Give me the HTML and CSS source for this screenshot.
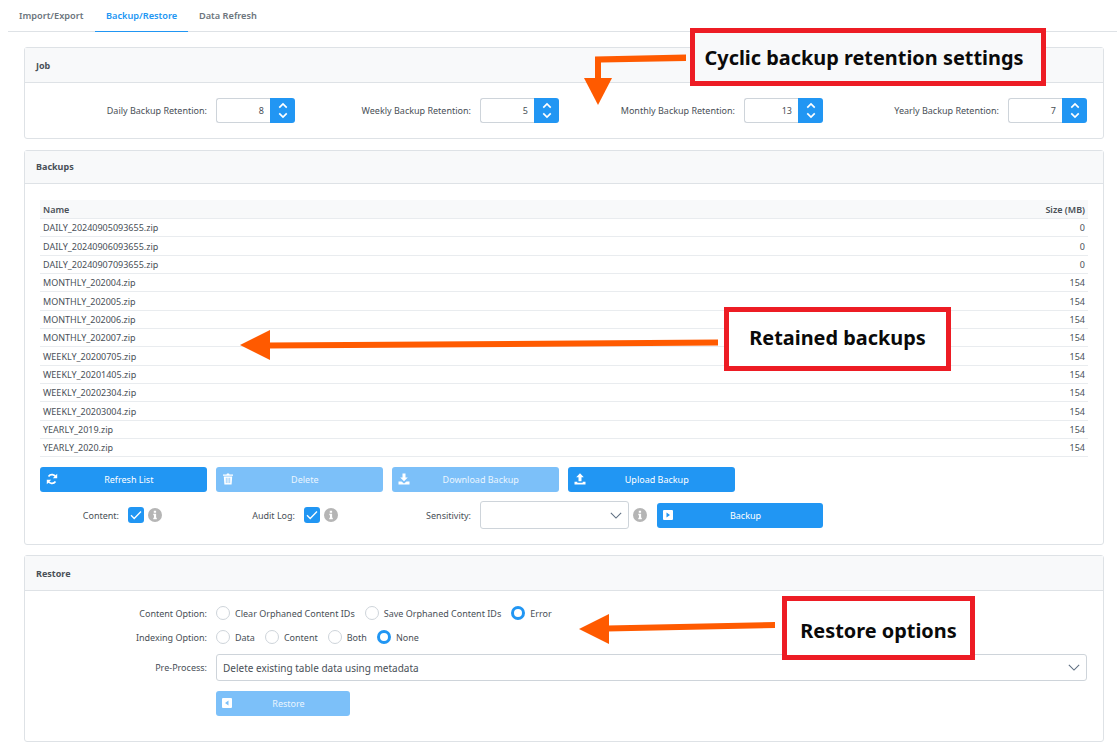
FILE: index.html
```html
<!DOCTYPE html>
<html lang="en">
<head>
    <meta charset="UTF-8">
    <meta name="viewport" content="width=device-width, initial-scale=1.0">
    <title>Backup/Restore</title>
    <link rel="stylesheet" href="styles.css">
</head>
<body>
    <svg width="0" height="0" class="defs">
        <defs>
            <symbol id="i-up" viewBox="0 0 12 8"><path d="M1.5 6.5 6 2l4.500 4.500" fill="none" stroke="currentColor" stroke-width="2"/></symbol>
            <symbol id="i-down" viewBox="0 0 12 8"><path d="M1.500 1.500 6 6l4.500-4.500" fill="none" stroke="currentColor" stroke-width="2"/></symbol>
            <symbol id="i-chev" viewBox="0 0 14 8"><path d="M1 1l6 6 6-6" fill="none" stroke="#5f6f82" stroke-width="1.300"/></symbol>
            <symbol id="i-refresh" viewBox="0 0 12 12"><path d="M10 4.200A4.300 4.300 0 0 0 2.500 3.400M2 7.800a4.300 4.300 0 0 0 7.500.8" fill="none" stroke="#fff" stroke-width="1.700"/><path d="M11.200 .8v4.400H6.800zM.8 11.200V6.800h4.400z" fill="#fff"/></symbol>
            <symbol id="i-trash" viewBox="0 0 12 12"><path d="M1 1.500h3.500L5 .5h2l.5 1H11v1.200H1zM1.800 3.400h8.400l-.6 8.100H2.400z" fill="#fff"/><path d="M4.300 4.800v5.300M6 4.800v5.300M7.700 4.800v5.300" stroke-width=".7" stroke="#7cc0f9"/></symbol>
            <symbol id="i-download" viewBox="0 0 12 12"><path d="M4.500 .5h3v4h2.300L6 8.300 2.200 4.500h2.300zM.5 8.500h3L6 10.500l2.500-2h3v3H.5z" fill="#fff"/></symbol>
            <symbol id="i-upload" viewBox="0 0 12 12"><path d="M6 .3 9.800 4.200H7.500v4h-3v-4H2.200zM.5 8.700h2.800v1h5.400v-1h2.800v2.800H.5z" fill="#fff"/></symbol>
            <symbol id="i-play" viewBox="0 0 10 10"><path fill-rule="evenodd" d="M1 0h8a1 1 0 0 1 1 1v8a1 1 0 0 1-1 1H1a1 1 0 0 1-1-1V1a1 1 0 0 1 1-1zM3.500 2.500v5L7 5z" fill="#fff"/></symbol>
            <symbol id="i-back" viewBox="0 0 10 10"><path fill-rule="evenodd" d="M1 0h8a1 1 0 0 1 1 1v8a1 1 0 0 1-1 1H1a1 1 0 0 1-1-1V1a1 1 0 0 1 1-1zM6.500 2.500v5L3 5z" fill="#fff"/></symbol>
            <symbol id="i-check" viewBox="0 0 16 16"><path d="M3 8.300l3.200 3.200L13 4.500" fill="none" stroke="#fff" stroke-width="1.300"/></symbol>
            <symbol id="i-info" viewBox="0 0 14 14"><circle cx="7" cy="7" r="7" fill="#b5b5b5"/><path d="M5.800 2.800h2.300v2H5.800zM5.300 5.800h2.800v4h.7v1.400H5.300V9.800H6V7.200h-.7z" fill="#fff"/></symbol>
        </defs>
    </svg>

    <nav class="tabs">
        <a class="tab">Import/Export</a>
        <a class="tab active">Backup/Restore</a>
        <a class="tab">Data Refresh</a>
    </nav>

    <main class="content">
        <section class="panel panel-job">
            <header class="panel-head head-job">Job</header>
            <div class="job-grid">
                <div class="field">
                    <label>Daily Backup Retention:</label>
                    <div class="spinner"><input type="text" value="8"><span class="spin-btn"><svg><use href="#i-up"/></svg><svg><use href="#i-down"/></svg></span></div>
                </div>
                <div class="field">
                    <label>Weekly Backup Retention:</label>
                    <div class="spinner"><input type="text" value="5"><span class="spin-btn"><svg><use href="#i-up"/></svg><svg><use href="#i-down"/></svg></span></div>
                </div>
                <div class="field">
                    <label>Monthly Backup Retention:</label>
                    <div class="spinner"><input type="text" value="13"><span class="spin-btn"><svg><use href="#i-up"/></svg><svg><use href="#i-down"/></svg></span></div>
                </div>
                <div class="field">
                    <label>Yearly Backup Retention:</label>
                    <div class="spinner"><input type="text" value="7"><span class="spin-btn"><svg><use href="#i-up"/></svg><svg><use href="#i-down"/></svg></span></div>
                </div>
            </div>
        </section>

        <section class="panel panel-backups">
            <header class="panel-head">Backups</header>
            <div class="backups-body">
                <table class="files">
                    <thead>
                        <tr><th>Name</th><th class="num">Size (MB)</th></tr>
                    </thead>
                    <tbody>
                        <tr><td>DAILY_20240905093655.zip</td><td class="num">0</td></tr>
                        <tr><td>DAILY_20240906093655.zip</td><td class="num">0</td></tr>
                        <tr><td>DAILY_20240907093655.zip</td><td class="num">0</td></tr>
                        <tr><td>MONTHLY_202004.zip</td><td class="num">154</td></tr>
                        <tr><td>MONTHLY_202005.zip</td><td class="num">154</td></tr>
                        <tr><td>MONTHLY_202006.zip</td><td class="num">154</td></tr>
                        <tr><td>MONTHLY_202007.zip</td><td class="num">154</td></tr>
                        <tr><td>WEEKLY_20200705.zip</td><td class="num">154</td></tr>
                        <tr><td>WEEKLY_20201405.zip</td><td class="num">154</td></tr>
                        <tr><td>WEEKLY_20202304.zip</td><td class="num">154</td></tr>
                        <tr><td>WEEKLY_20203004.zip</td><td class="num">154</td></tr>
                        <tr><td>YEARLY_2019.zip</td><td class="num">154</td></tr>
                        <tr><td>YEARLY_2020.zip</td><td class="num">154</td></tr>
                    </tbody>
                </table>

                <div class="btn-row">
                    <button class="btn"><svg class="btn-icon"><use href="#i-refresh"/></svg>Refresh List</button>
                    <button class="btn off"><svg class="btn-icon"><use href="#i-trash"/></svg>Delete</button>
                    <button class="btn off"><svg class="btn-icon"><use href="#i-download"/></svg>Download Backup</button>
                    <button class="btn"><svg class="btn-icon"><use href="#i-upload"/></svg>Upload Backup</button>
                </div>

                <div class="opt-row">
                    <div class="opt opt-content">
                        <label>Content:</label>
                        <span class="check"><svg><use href="#i-check"/></svg></span>
                        <svg class="info"><use href="#i-info"/></svg>
                    </div>
                    <div class="opt opt-audit">
                        <label>Audit Log:</label>
                        <span class="check"><svg><use href="#i-check"/></svg></span>
                        <svg class="info"><use href="#i-info"/></svg>
                    </div>
                    <div class="opt opt-sens">
                        <label>Sensitivity:</label>
                        <div class="select select-sens"><span></span><svg><use href="#i-chev"/></svg></div>
                        <svg class="info"><use href="#i-info"/></svg>
                        <button class="btn btn-backup"><svg class="btn-icon small"><use href="#i-play"/></svg>Backup</button>
                    </div>
                </div>
            </div>
        </section>

        <section class="panel panel-restore">
            <header class="panel-head head-restore">Restore</header>
            <div class="restore-body">
                <div class="form-row">
                    <label>Content Option:</label>
                    <div class="radios">
                        <span class="radio"></span><span class="r-text">Clear Orphaned Content IDs</span>
                        <span class="radio"></span><span class="r-text">Save Orphaned Content IDs</span>
                        <span class="radio on"></span><span class="r-text">Error</span>
                    </div>
                </div>
                <div class="form-row">
                    <label>Indexing Option:</label>
                    <div class="radios">
                        <span class="radio"></span><span class="r-text">Data</span>
                        <span class="radio"></span><span class="r-text">Content</span>
                        <span class="radio"></span><span class="r-text">Both</span>
                        <span class="radio on"></span><span class="r-text">None</span>
                    </div>
                </div>
                <div class="form-row row-pre">
                    <label>Pre-Process:</label>
                    <div class="select select-pre"><span>Delete existing table data using metadata</span><svg><use href="#i-chev"/></svg></div>
                </div>
                <div class="form-row row-btn">
                    <label></label>
                    <button class="btn off btn-restore"><svg class="btn-icon small"><use href="#i-back"/></svg>Restore</button>
                </div>
            </div>
        </section>
    </main>

    <!-- annotations drawn over the screenshot -->
    <svg class="arrows" width="1117" height="745" viewBox="0 0 1117 745">
        <g fill="#ff5a00" stroke="none">
            <path d="M686 54.500v6.500l-85 1.500V80h-6V56.500z"/>
            <path d="M584 78h28l-14 27z"/>
            <path d="M718 339.500v6l-450 3v-6z"/>
            <path d="M240 345l30-15v30z"/>
            <path d="M775 622v6l-168 3.500v-6z"/>
            <path d="M579 629l30-15v30z"/>
        </g>
    </svg>
    <div class="note note-cyclic">Cyclic backup retention settings</div>
    <div class="note note-retained">Retained backups</div>
    <div class="note note-restore">Restore options</div>
</body>
</html>
```

FILE: styles.css
```css
* {
    box-sizing: border-box;
}

body {
    margin: 0;
    padding-left: 8px;
    height: 745px;
    overflow: hidden;
    position: relative;
    background-color: #ffffff;
    color: #495057;
    font-family: "Noto Sans", "Open Sans", Arial, sans-serif;
    font-size: 9px;
}

.defs {
    position: absolute;
}

/* Tabs */
.tabs {
    display: flex;
    height: 32px;
    border-bottom: 1px solid #dee2e6;
}

.tab {
    height: 32px;
    padding: 9px 11px 0;
    font-size: 9.200px;
    font-weight: 600;
    color: #6c757d;
    white-space: nowrap;
}

.tab:first-child {
    width: 87px;
}

.tab.active {
    width: 93px;
    text-align: center;
    color: #2196f3;
    border-bottom: 1px solid #2196f3;
}

/* Panels */
.content {
    padding: 15px 13px 0 16px;
}

.panel {
    border: 1px solid #dee2e6;
    border-radius: 3px;
}

.panel-job {
    height: 92px;
}

.panel-backups {
    height: 395px;
    margin-top: 11px;
}

.panel-restore {
    height: 187px;
    margin-top: 10px;
}

.panel-head {
    height: 33px;
    padding: 9px 11px 0;
    background-color: #f8f9fa;
    border-bottom: 1px solid #dee2e6;
    font-weight: 700;
    color: #495057;
}

.head-job,
.head-restore {
    height: 35px;
    padding-top: 11px;
}

/* Job */
.job-grid {
    display: grid;
    grid-template-columns: repeat(4, 264px);
    margin-left: 6px;
    padding-top: 15px;
}

.field {
    display: flex;
    justify-content: flex-end;
    align-items: center;
    gap: 9px;
}

.spinner {
    display: flex;
    width: 79px;
    height: 25px;
}

.spinner input {
    width: 54px;
    height: 25px;
    padding: 0 6px;
    border: 1px solid #ced4da;
    border-right: none;
    border-radius: 3px 0 0 3px;
    text-align: right;
    color: #495057;
    font: inherit;
}

.spin-btn {
    display: flex;
    flex-direction: column;
    align-items: center;
    justify-content: center;
    gap: 3px;
    width: 25px;
    background-color: #2196f3;
    border-radius: 0 3px 3px 0;
    color: #ffffff;
}

.spin-btn svg {
    width: 10px;
    height: 7px;
}

/* Backups */
.backups-body {
    padding: 16px 15px 0;
}

.files {
    width: 1048px;
    border-collapse: collapse;
    table-layout: fixed;
}

.files th,
.files td {
    height: 18.350px;
    padding: 1px 3px 0;
    border-bottom: 1px solid #e9ecef;
    text-align: left;
    line-height: 12px;
    white-space: nowrap;
}

.files th {
    height: 18.500px;
    padding-top: 2px;
    background-color: #f8f9fa;
    font-weight: 600;
}

.files .num {
    text-align: right;
}

.btn-row {
    display: flex;
    gap: 9.400px;
    margin-top: 10px;
}

.btn {
    position: relative;
    width: 166.600px;
    height: 25px;
    border: none;
    border-radius: 3px;
    background-color: #2196f3;
    color: #ffffff;
    font: inherit;
    padding: 0 0 0 11px;
}

.btn.off {
    background-color: #7cc0f9;
    color: #eaf5fe;
}

/* icon sits over the button's left edge, the label stays centred */
.btn-icon {
    position: absolute;
    left: 6px;
    top: 6px;
    width: 12px;
    height: 12px;
}

.btn-icon.small {
    top: 7px;
    width: 10px;
    height: 10px;
}

.opt-row {
    display: flex;
    align-items: center;
    height: 28px;
    margin-top: 9px;
}

.opt {
    display: flex;
    align-items: center;
    justify-content: flex-end;
}

.opt-content {
    width: 122px;
}

.opt-audit {
    width: 176px;
}

.opt-sens {
    width: 485px;
}

.opt label {
    margin-right: 9px;
    white-space: nowrap;
}

.check {
    display: flex;
    width: 16px;
    height: 16px;
    background-color: #2196f3;
    border-radius: 3px;
    margin-right: 4px;
}

.check svg {
    width: 16px;
    height: 16px;
}

.info {
    width: 14px;
    height: 14px;
}

.select {
    display: flex;
    align-items: center;
    justify-content: space-between;
    border: 1px solid #ced4da;
    border-radius: 3px;
    background-color: #ffffff;
}

.select svg {
    width: 12px;
    height: 7px;
}

.select-sens {
    width: 149px;
    height: 28px;
    padding: 0 6px;
    margin-right: 4px;
}

.btn-backup {
    width: 166px;
    margin: 1px 0 0 10px;
}

/* Restore */
.restore-body {
    padding-top: 14px;
}

.form-row {
    display: flex;
    align-items: center;
    height: 16px;
    margin-bottom: 8px;
}

.form-row label {
    width: 182px;
    margin-right: 9px;
    text-align: right;
    white-space: nowrap;
}

.radios {
    display: flex;
    align-items: center;
}

.radio {
    width: 14px;
    height: 14px;
    border: 1px solid #ced4da;
    border-radius: 50%;
    background-color: #ffffff;
}

.radio.on {
    border: 3.500px solid #2196f3;
}

.r-text {
    margin: 0 10px 0 5px;
    white-space: nowrap;
}

.row-pre {
    height: 27px;
    margin-top: 9px;
    margin-bottom: 10px;
}

.select-pre {
    width: 871px;
    height: 27px;
    padding: 0 6px;
    font-size: 10px;
}

.row-btn {
    height: 25px;
}

.btn-restore {
    width: 134px;
}

/* Annotations */
.arrows {
    position: absolute;
    left: 0;
    top: 0;
    pointer-events: none;
}

.note {
    position: absolute;
    display: flex;
    align-items: center;
    justify-content: center;
    border: 5px solid #ed1c24;
    color: #0a0a0a;
    font-weight: 700;
    font-size: 19.900px;
    white-space: nowrap;
}

.note-cyclic {
    left: 690px;
    top: 28px;
    width: 356px;
    height: 58px;
    padding-right: 8px;
    background-color: #f8f9fa;
}

.note-retained {
    left: 724px;
    top: 307px;
    width: 227px;
    height: 64px;
    padding-bottom: 4px;
    background-color: #ffffff;
}

.note-restore {
    left: 782px;
    top: 596px;
    width: 193px;
    height: 64px;
    padding-top: 4px;
    background-color: #ffffff;
}
```
